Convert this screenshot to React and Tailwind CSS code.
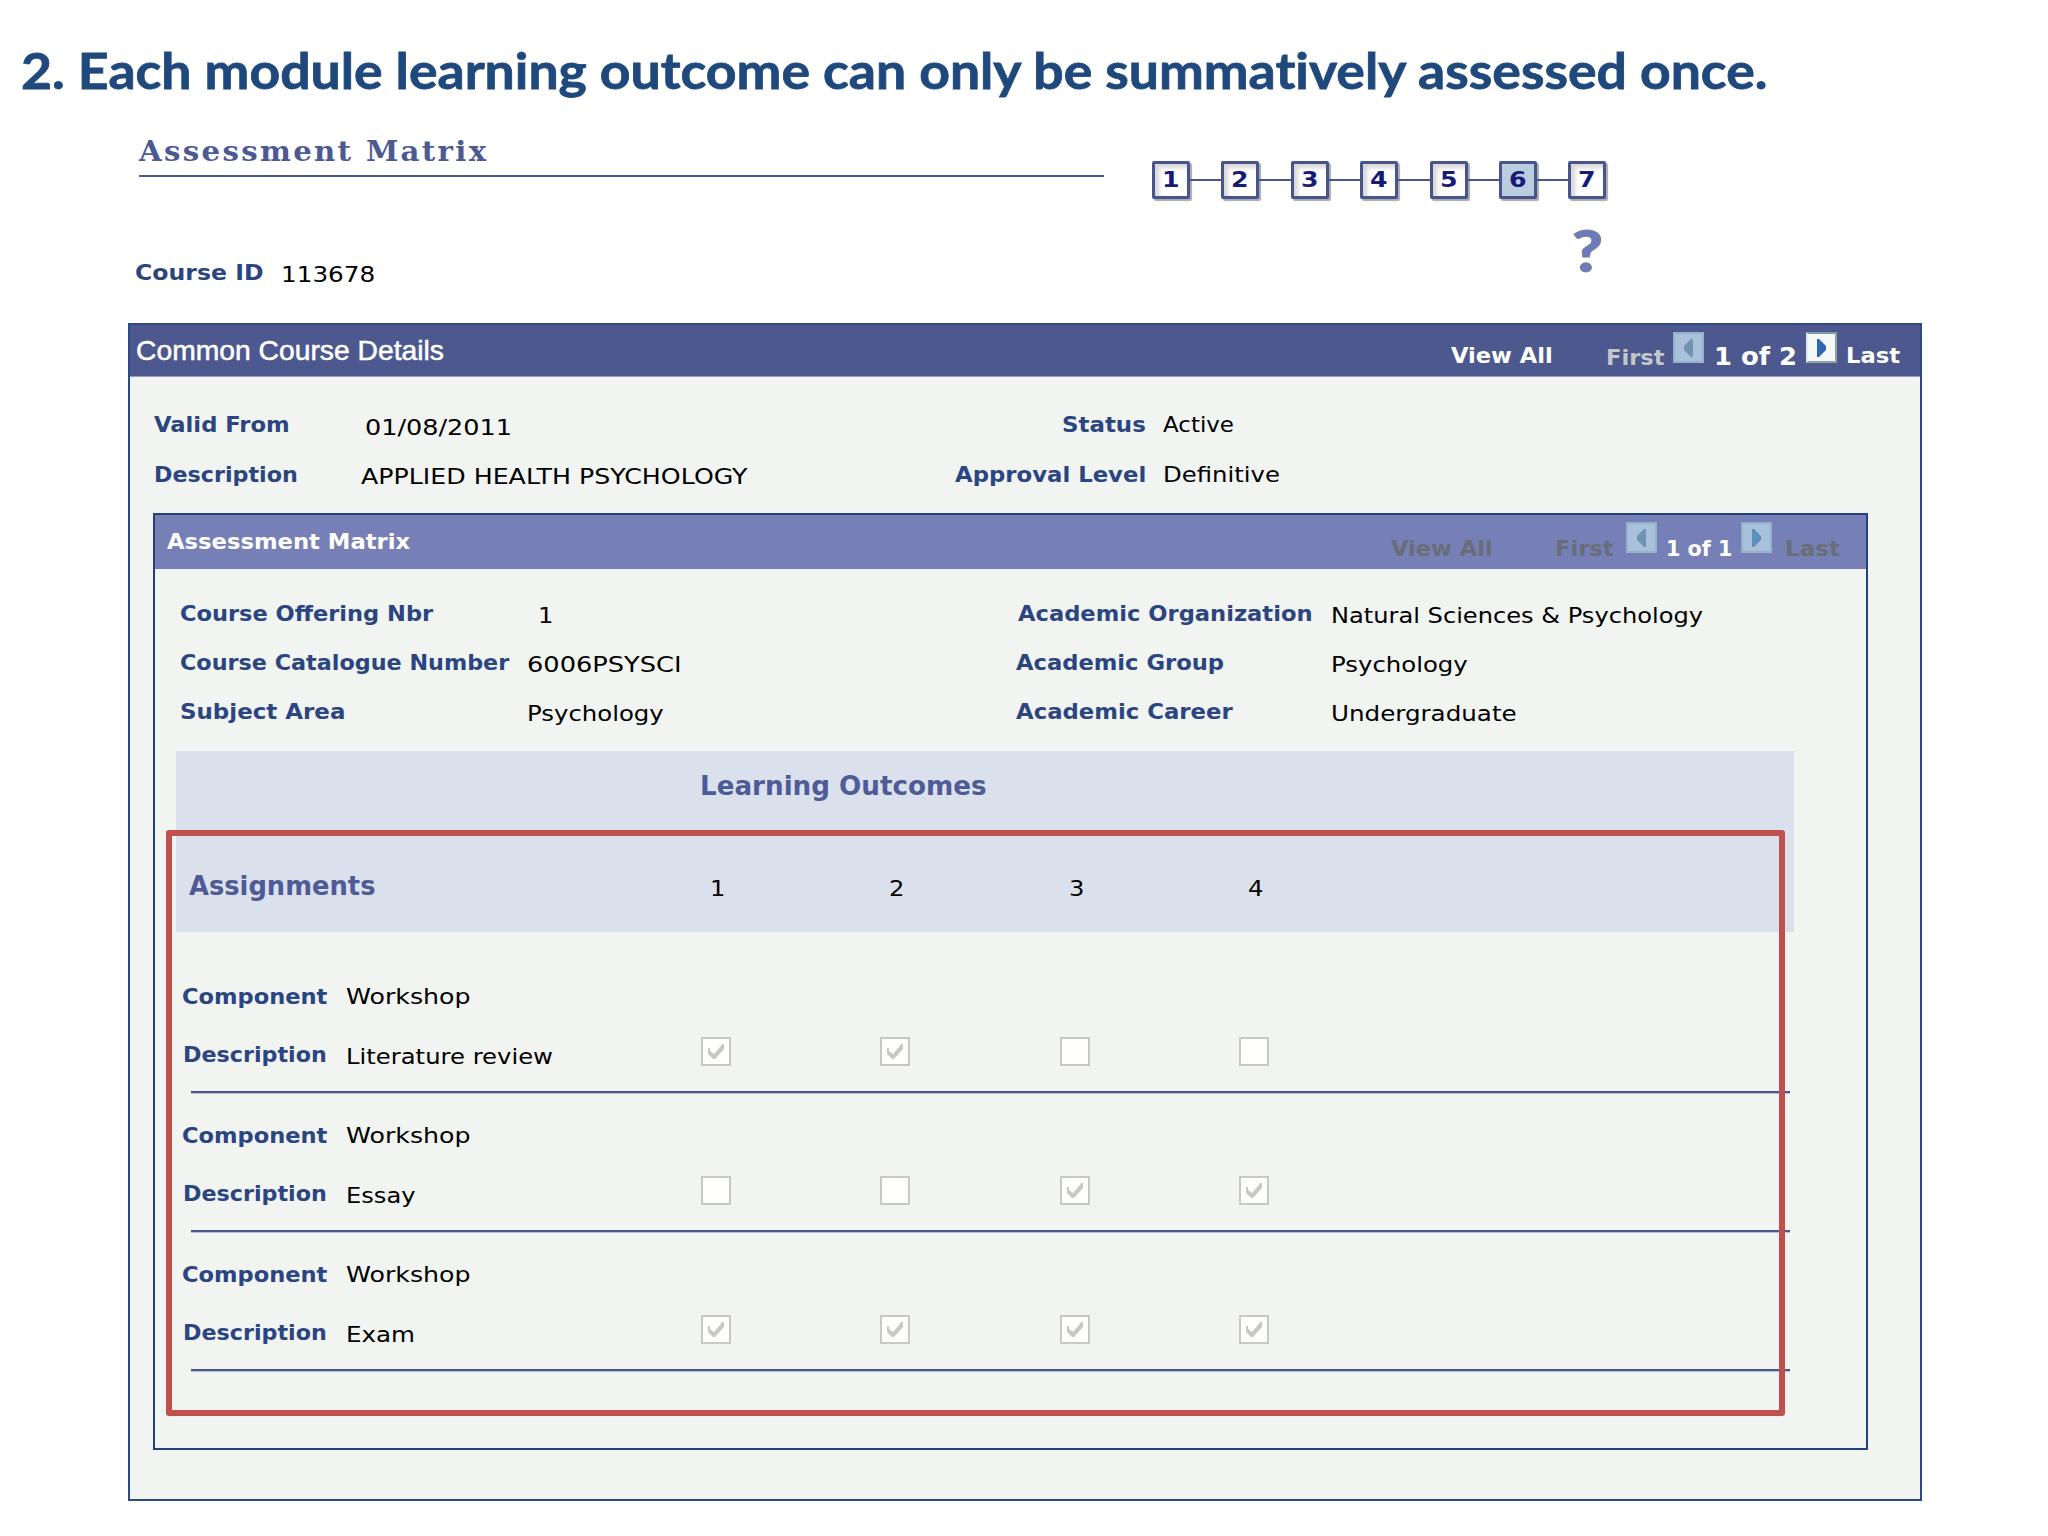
import React, { useLayoutEffect, useRef, useState } from 'react';
import clsx from 'clsx';

const steps = [1, 2, 3, 4, 5, 6, 7];
const activeStep = 6;

const outcomes = [1, 2, 3, 4];

const assignments = [
  { component: 'Workshop', description: 'Literature review', width: 207, checked: [1, 2] },
  { component: 'Workshop', description: 'Essay', width: 69, checked: [3, 4] },
  { component: 'Workshop', description: 'Exam', width: 69, checked: [1, 2, 3, 4] },
];

// Stretches a single line of text to the given width
const Fit = ({ w, className, children }) => {
  const ref = useRef(null);
  const [scale, setScale] = useState(1);

  useLayoutEffect(() => {
    setScale(w / ref.current.offsetWidth);
  }, [w, children]);

  return (
    <div className={clsx('shrink-0 whitespace-nowrap', className)} style={{ width: w }}>
      <span ref={ref} className="inline-block origin-left" style={{ transform: `scaleX(${scale})` }}>
        {children}
      </span>
    </div>
  );
};

const Label = ({ w, className, children }) => (
  <Fit w={w} className={clsx('text-[21px] leading-[24px] font-bold text-[#2b4580]', className)}>{children}</Fit>
);

const Value = ({ w, className, children }) => (
  <Fit w={w} className={clsx('text-[21px] leading-[24px] text-black', className)}>{children}</Fit>
);

const PagerText = ({ w, className, children }) => (
  <Fit w={w} className={clsx('leading-[24px] font-bold', className)}>{children}</Fit>
);

const PagerButton = ({ next, enabled, className }) => (
  <div
    className={clsx(
      'flex h-[31px] w-[31px] shrink-0 items-center justify-center border-2',
      enabled ? 'border-t-[#7d9aa5] border-r-[#8fa39f] border-b-[#8fa39f] border-l-[#dfe8ee] bg-[#f4f7f8]' : 'border-[#94b3cb] bg-[#a9c0da]',
      className
    )}
  >
    <svg width="9" height="18" viewBox="0 0 9 18" className={enabled ? 'fill-[#2f67b0]' : next ? 'fill-[#5d8fbd]' : 'fill-[#6f93b0]'}>
      {next ? <path d="M0 0H2L9 7V11L2 18H0Z" /> : <path d="M9 0H7L0 7V11L7 18H9Z" />}
    </svg>
  </div>
);

const Checkbox = ({ checked }) => (
  <div className="flex h-[29px] w-[30px] items-center justify-center border-2 border-[#c8c8c5] bg-[#fefefd]">
    {checked && (
      <svg width="18" height="18" viewBox="0 0 18 18" className="fill-[#c8c8c3]">
        <path d="M1 5H3V8L7 11L13 4L15 1H17V6L8 16H6L1 11Z" />
      </svg>
    )}
  </div>
);

const StepBar = () => (
  <div className="flex items-center">
    {steps.map((step) => (
      <React.Fragment key={step}>
        {step > 1 && <div className="h-[2px] w-[31.4px] bg-[#48558f]" />}
        <div
          className={clsx(
            'flex h-[38px] w-[38px] items-center justify-center rounded-[2px] border-[3px] border-[#48548c] text-[21px] leading-none font-bold text-[#141c78]',
            step === activeStep
              ? 'bg-[#b9cddf] shadow-[2px_2px_1px_#a9a9b0]'
              : 'bg-white shadow-[2px_2px_1px_#a9a9b0,inset_4px_4px_4px_#d9d6d6]'
          )}
        >
          <Fit w={18}>{step}</Fit>
        </div>
      </React.Fragment>
    ))}
  </div>
);

const AssignmentRow = ({ item }) => (
  <div className="flex h-[139px] flex-col">
    <div className="flex h-[53px] pt-[31px] pl-[6px]">
      <Label w={145}>Component</Label>
      <Value w={125} className="ml-[19px]">{item.component}</Value>
    </div>
    <div className="grid h-[84px] grid-cols-[525px_repeat(4,179.3px)] pt-[30px]">
      <div className="flex pt-[6px] pl-[7px]">
        <Label w={144}>Description</Label>
        <Value w={item.width} className="mt-[2px] ml-[19px]">{item.description}</Value>
      </div>
      {outcomes.map((n) => (
        <Checkbox key={n} checked={item.checked.includes(n)} />
      ))}
    </div>
    <div className="ml-[15px] h-[2px] w-[1599px] bg-[#4a578d] shadow-[0_1px_0_#b8c0d6]" />
  </div>
);

const Matrix = () => (
  <div className="relative mt-[2px] ml-[21px] w-[1618px]">
    <div className="h-[181px] bg-[#dae1ed] text-[27px] leading-[32px] font-bold text-[#4f5b96]">
      <Fit w={287} className="ml-[524px] pt-[19px]">Learning Outcomes</Fit>
      <div className="grid grid-cols-[525px_repeat(4,179.3px)] pt-[68px]">
        <Fit w={187} className="ml-[13px]">Assignments</Fit>
        {outcomes.map((n) => (
          <Value key={n} w={15} className="mt-[7px] ml-[9px] font-normal">{n}</Value>
        ))}
      </div>
    </div>
    <div className="pt-[22px]">
      {assignments.map((item, i) => (
        <AssignmentRow key={i} item={item} />
      ))}
    </div>
    <div className="absolute top-[79px] left-[-10px] h-[586px] w-[1619px] rounded-[3px] border-[6px] border-[#c0504d]" />
  </div>
);

const AssessmentPanel = () => (
  <div className="ml-[23px] h-[937px] w-[1715px] border-2 border-[#26407a]">
    <div className="flex h-[54px] items-start bg-[#7680b6] pr-[26px]">
      <PagerText w={243} className="mt-[15px] ml-[12px] text-[21px] text-white">Assessment Matrix</PagerText>
      <div className="ml-auto flex text-[21px] text-[#686d78]">
        <PagerText w={102} className="mt-[22px]">View All</PagerText>
        <PagerText w={58} className="mt-[22px] ml-[62px]">First</PagerText>
        <PagerButton className="mt-[7px] ml-[13px]" />
        <PagerText w={66} className="mt-[22px] ml-[9px] text-white">1 of 1</PagerText>
        <PagerButton next className="mt-[7px] ml-[9px]" />
        <PagerText w={55} className="mt-[22px] ml-[13px]">Last</PagerText>
      </div>
    </div>
    <div className="pt-[33px]">
      <div className="grid h-[49px] grid-cols-[347px_489px_315px_auto] pl-[25px]">
        <Label w={253}>Course Offering Nbr</Label>
        <Value w={15} className="mt-[2px] ml-[11px]">1</Value>
        <Label w={295} className="ml-[2px]">Academic Organization</Label>
        <Value w={372} className="mt-[2px]">Natural Sciences &amp; Psychology</Value>
      </div>
      <div className="grid h-[49px] grid-cols-[347px_489px_315px_auto] pl-[25px]">
        <Label w={329}>Course Catalogue Number</Label>
        <Value w={154} className="mt-[2px]">6006PSYSCI</Value>
        <Label w={208}>Academic Group</Label>
        <Value w={137} className="mt-[2px]">Psychology</Value>
      </div>
      <div className="grid h-[49px] grid-cols-[347px_489px_315px_auto] pl-[25px]">
        <Label w={165}>Subject Area</Label>
        <Value w={137} className="mt-[2px]">Psychology</Value>
        <Label w={217}>Academic Career</Label>
        <Value w={186} className="mt-[2px]">Undergraduate</Value>
      </div>
    </div>
    <Matrix />
  </div>
);

const App = () => {
  return (
    <div className="flex h-[1536px] w-[2048px] flex-col overflow-hidden bg-white font-['DejaVu_Sans',sans-serif]">
      <h1 className="h-[124px] pt-[46px] pl-[21px] font-['Lato',sans-serif] text-[50px] leading-[49px] font-bold text-[#1f497d] [-webkit-text-stroke:0.8px_#1f497d] [font-variant-ligatures:none]">
        <Fit w={1746}>2. Each module learning outcome can only be summatively assessed once.</Fit>
      </h1>

      <div className="flex h-[199px] pl-[134px]">
        <div className="w-[974px]">
          <Fit w={349} className="pt-[14px] pl-[5px] font-['DejaVu_Serif_Condensed','DejaVu_Serif',serif] text-[28px] leading-[28px] font-bold tracking-[2px] text-[#4d5a92]">
            Assessment Matrix
          </Fit>
          <div className="mt-[9px] ml-[5px] h-[2px] w-[965px] bg-[#4c598e]" />
          <div className="flex pt-[84px]">
            <Label w={128} className="ml-px">Course ID</Label>
            <Value w={94} className="mt-[2px] ml-[18px]">113678</Value>
          </div>
        </div>
        <div className="ml-[44px] pt-[37px]">
          <StepBar />
          <Fit w={31} className="mt-[22px] ml-[420px] font-['Lato',sans-serif] text-[58px] leading-[58px] font-black text-[#6b7cbc] [-webkit-text-stroke:1px_#7b7f92]">
            ?
          </Fit>
        </div>
      </div>

      <div className="ml-[128px] h-[1178px] w-[1794px] border-2 border-[#2f4a80] bg-[#f1f4f1]">
        <div className="flex h-[52px] items-start border-b border-[#949fc2] bg-[#4c588e] pr-[20px]">
          <Fit w={308} className="mt-[12px] ml-[6px] font-['Liberation_Sans',sans-serif] text-[28px] leading-[28px] text-white [-webkit-text-stroke:0.5px_#ffffff]">
            Common Course Details
          </Fit>
          <div className="ml-auto flex text-[21px] text-white">
            <PagerText w={102} className="mt-[19px]">View All</PagerText>
            <PagerText w={58} className="mt-[21px] ml-[53px] text-[#c4c7ca]">First</PagerText>
            <PagerButton className="mt-[7px] ml-[9px]" />
            <PagerText w={83} className="mt-[20px] ml-[10px] text-[24px]">1 of 2</PagerText>
            <PagerButton next enabled className="mt-[7px] ml-[9px]" />
            <PagerText w={54} className="mt-[19px] ml-[9px]">Last</PagerText>
          </div>
        </div>

        <div className="pt-[36px]">
          <div className="grid h-[50px] grid-cols-[207px_540px_245px_auto] pl-[24px]">
            <Label w={136}>Valid From</Label>
            <Value w={147} className="mt-[3px] ml-[4px]">01/08/2011</Value>
            <Label w={84} className="ml-auto">Status</Label>
            <Value w={71} className="ml-[17px]">Active</Value>
          </div>
          <div className="grid h-[50px] grid-cols-[207px_540px_245px_auto] pl-[24px]">
            <Label w={144}>Description</Label>
            <Value w={386} className="mt-[2px]">APPLIED HEALTH PSYCHOLOGY</Value>
            <Label w={191} className="ml-auto">Approval Level</Label>
            <Value w={117} className="ml-[17px]">Definitive</Value>
          </div>
        </div>

        <AssessmentPanel />
      </div>
    </div>
  );
};

export default App;
